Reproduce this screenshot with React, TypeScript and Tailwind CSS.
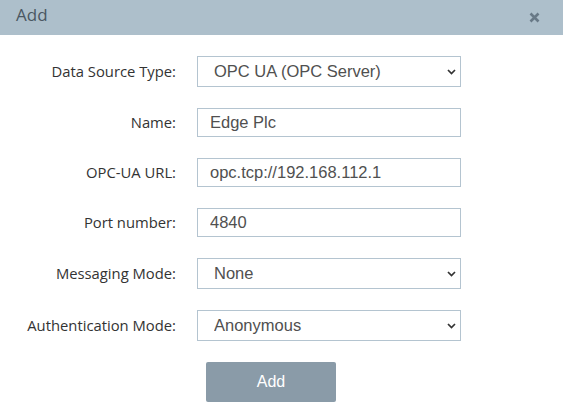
import React from 'react';

const labelCls =
  "w-[176px] shrink-0 text-right text-[14.8px] text-[#333] font-['Open_Sans',sans-serif]";
const fieldCls =
  "w-[264px] border border-[#b4c4d0] bg-white pl-[12px] text-[16.5px] text-[#505050] font-['Liberation_Sans',Arial,sans-serif] outline-none";

const Chevron: React.FC = () => (
  <svg
    className="pointer-events-none absolute right-[5px] top-1/2 -translate-y-1/2"
    width="9"
    height="6"
    viewBox="0 0 9 6"
  >
    <path d="M1 1 L4.5 4.5 L8 1" fill="none" stroke="#333" strokeWidth="1.7" />
  </svg>
);

interface RowProps {
  label: string;
  value: string;
}

const SelectRow: React.FC<RowProps> = ({ label, value }) => (
  <div className="flex items-center gap-[21px]">
    <label className={labelCls}>{label}</label>
    <div className="relative">
      <select
        defaultValue={value}
        className={`${fieldCls} h-[31px] appearance-none pl-[16px]`}
      >
        <option>{value}</option>
      </select>
      <Chevron />
    </div>
  </div>
);

const InputRow: React.FC<RowProps> = ({ label, value }) => (
  <div className="flex items-center gap-[21px]">
    <label className={labelCls}>{label}</label>
    <input defaultValue={value} className={`${fieldCls} h-[29px]`} />
  </div>
);

export default function App() {
  return (
    <div className="w-[563px] h-[417px] bg-white overflow-hidden">
      {/* Header */}
      <div className="h-[35px] bg-[#adbfcb] flex items-center justify-between pl-[16px] pr-[23px]">
        <span className="-mt-[5px] text-[17px] text-[#4a5762] font-['Open_Sans',sans-serif]">Add</span>
        <svg width="11" height="11" viewBox="0 0 11 11">
          <path d="M1.5 1.5 L9.5 9.5 M9.5 1.5 L1.5 9.5" stroke="#687987" strokeWidth="2.6" />
        </svg>
      </div>

      {/* Form */}
      <div className="flex flex-col gap-[21px] pt-[21px]">
        <SelectRow label="Data Source Type:" value="OPC UA (OPC Server)" />
        <InputRow label="Name:" value="Edge Plc" />
        <InputRow label="OPC-UA URL:" value="opc.tcp://192.168.112.1" />
        <InputRow label="Port number:" value="4840" />
        <SelectRow label="Messaging Mode:" value="None" />
        <SelectRow label="Authentication Mode:" value="Anonymous" />
        <div className="pl-[206px]">
          <button className="w-[130px] h-[40px] rounded-[2px] bg-[#8a9ba8] text-white text-[16px] font-['Liberation_Sans',Arial,sans-serif]">
            Add
          </button>
        </div>
      </div>
    </div>
  );
}
